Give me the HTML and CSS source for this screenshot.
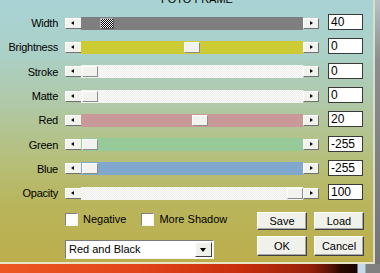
FILE: index.html
```html
<!DOCTYPE html>
<html>
<head>
<meta charset="utf-8">
<title>Foto Frame</title>
<link rel="stylesheet" href="styles.css">
</head>
<body>
<div class="screen">
  <div class="top">
    <div class="dialog">
      <div class="title">FOTO FRAME</div>
      <div class="sliders">
        <div class="row">
          <span class="label">Width</span>
          <div class="slider">
            <div class="arrow left"><i class="tri"></i></div>
            <div class="track t-gray"><div class="thumb checker" style="left:19px"></div></div>
            <div class="arrow right"><i class="tri"></i></div>
          </div>
          <span class="value">40</span>
        </div>
        <div class="row">
          <span class="label">Brightness</span>
          <div class="slider">
            <div class="arrow left"><i class="tri"></i></div>
            <div class="track t-yellow"><div class="thumb" style="left:103px"></div></div>
            <div class="arrow right"><i class="tri"></i></div>
          </div>
          <span class="value">0</span>
        </div>
        <div class="row">
          <span class="label">Stroke</span>
          <div class="slider">
            <div class="arrow left"><i class="tri"></i></div>
            <div class="track t-light"><div class="thumb" style="left:1px"></div></div>
            <div class="arrow right"><i class="tri"></i></div>
          </div>
          <span class="value">0</span>
        </div>
        <div class="row">
          <span class="label">Matte</span>
          <div class="slider">
            <div class="arrow left"><i class="tri"></i></div>
            <div class="track t-light"><div class="thumb" style="left:1px"></div></div>
            <div class="arrow right"><i class="tri"></i></div>
          </div>
          <span class="value">0</span>
        </div>
        <div class="row">
          <span class="label">Red</span>
          <div class="slider">
            <div class="arrow left"><i class="tri"></i></div>
            <div class="track t-red"><div class="thumb" style="left:111px"></div></div>
            <div class="arrow right"><i class="tri"></i></div>
          </div>
          <span class="value">20</span>
        </div>
        <div class="row">
          <span class="label">Green</span>
          <div class="slider">
            <div class="arrow left"><i class="tri"></i></div>
            <div class="track t-green"><div class="thumb" style="left:1px"></div></div>
            <div class="arrow right"><i class="tri"></i></div>
          </div>
          <span class="value">-255</span>
        </div>
        <div class="row">
          <span class="label">Blue</span>
          <div class="slider">
            <div class="arrow left"><i class="tri"></i></div>
            <div class="track t-blue"><div class="thumb" style="left:1px"></div></div>
            <div class="arrow right"><i class="tri"></i></div>
          </div>
          <span class="value">-255</span>
        </div>
        <div class="row">
          <span class="label">Opacity</span>
          <div class="slider">
            <div class="arrow left"><i class="tri"></i></div>
            <div class="track t-light"><div class="thumb" style="left:206px"></div></div>
            <div class="arrow right"><i class="tri"></i></div>
          </div>
          <span class="value">100</span>
        </div>
      </div>
      <div class="bottom">
        <div class="brow a">
          <div class="left">
            <label class="check"><span class="box"></span><span>Negative</span></label>
            <label class="check"><span class="box"></span><span>More Shadow</span></label>
          </div>
          <div class="buttons">
            <span class="btn">Save</span>
            <span class="btn">Load</span>
          </div>
        </div>
        <div class="brow b">
          <div class="left">
            <div class="select"><span>Red and Black</span><span class="drop"><i class="dtri"></i></span></div>
          </div>
          <div class="buttons">
            <span class="btn">OK</span>
            <span class="btn">Cancel</span>
          </div>
        </div>
      </div>
    </div>
    <div class="edge"></div>
  </div>
  <div class="desktop"></div>
</div>
</body>
</html>
```

FILE: styles.css
```css
* { box-sizing: border-box; }
html, body { margin: 0; padding: 0; }
body {
  width: 380px;
  height: 273px;
  overflow: hidden;
  font-family: "Liberation Sans", Arial, sans-serif;
  font-size: 11px;
  color: #000;
  background: #7a7a7a;
}
.screen { display: flex; flex-direction: column; width: 380px; height: 273px; }
.top { display: flex; height: 264px; }
.dialog {
  width: 375px;
  height: 264px;
  border-right: 2px solid #dcdccc;
  border-bottom: 2px solid #e8e4c8;
  background: linear-gradient(to bottom, #a8d3d5 0px, #abd0c6 55px, #b0c8a6 105px, #b5c07e 155px, #b9b55c 205px, #bcae4c 262px);
  overflow: hidden;
  display: flex;
  flex-direction: column;
}
.edge { flex: 1; background: linear-gradient(to bottom, #b4c4c4 0px, #8a8e8e 60px, #747474 264px); }
.desktop {
  height: 9px;
  background: linear-gradient(to right, #ec5822 0px, #e24419 140px, #c82e0c 240px, #962008 310px, #5a1406 330px, #2a0a02 340px, #1a0600 357px, #c4d8e8 358px, #c4d8e8 365px, #808080 366px);
}
.title {
  height: 13px;
  margin-top: -7px;
  line-height: 13px;
  text-align: center;
  padding-left: 21px;
  flex: none;
}
.sliders { display: flex; flex-direction: column; padding-top: 5px; }
.row { display: flex; align-items: center; height: 24.3px; flex: none; }
.label { width: 58px; flex: none; text-align: right; letter-spacing: -0.25px; white-space: nowrap; }
.slider {
  display: grid;
  grid-template-columns: 16px 222px 16px;
  align-items: center;
  width: 254px;
  height: 13px;
  margin-left: 7px;
  flex: none;
}
.arrow {
  width: 16px;
  height: 11px;
  background: #f2f2ee;
  border: 1px solid;
  border-color: #ffffff #707070 #707070 #ffffff;
  position: relative;
}
.tri {
  position: absolute;
  top: 2px;
  left: 5px;
  width: 0;
  height: 0;
  border-top: 2.5px solid transparent;
  border-bottom: 2.5px solid transparent;
}
.left .tri { border-right: 3px solid #000; }
.right .tri { border-left: 3px solid #000; left: 6px; }
.track { position: relative; width: 222px; height: 13px; }
.t-gray { background: #7f7f7f; }
.t-yellow { background: #cccb33; }
.t-red { background: #c99899; }
.t-green { background: #96ca98; }
.t-blue { background: #80a8cf; }
.t-light { background: repeating-conic-gradient(#fbfbfa 0 25%, #ededeb 0 50%) 0 0 / 2px 2px; }
.thumb {
  position: absolute;
  top: 1px;
  width: 16px;
  height: 11px;
  background: #f2f2ee;
  border: 1px solid;
  border-color: #ffffff #8c8c8c #8c8c8c #ffffff;
}
.thumb.checker {
  width: 14px;
  background: repeating-conic-gradient(#000 0 25%, #fff 0 50%) 0 0 / 2px 2px;
  border-color: #b0b0b0 #606060 #606060 #b0b0b0;
}
.value {
  flex: none;
  width: 35px;
  height: 16px;
  margin-left: 9px;
  margin-bottom: 2px;
  background: #fff;
  border: 1px solid #3a3a3a;
  font-size: 12px;
  line-height: 14px;
  padding-left: 2px;
}
.bottom { display: flex; flex-direction: column; padding-left: 65px; }
.brow { display: flex; flex: none; }
.brow.a { margin-top: 6.6px; height: 18px; }
.brow.b { margin-top: 6px; height: 20px; }
.left { width: 149px; flex: none; display: flex; }
.check { display: flex; align-items: center; gap: 5px; height: 15px; white-space: nowrap; }
.check + .check { margin-left: 15px; }
.box {
  width: 13px;
  height: 13px;
  background: #fff;
  border: 1px solid;
  border-color: #808080 #f4f4f4 #f4f4f4 #808080;
}
.buttons { display: flex; gap: 7px; margin-left: 43px; }
.btn {
  width: 50px;
  background: #f1f1ec;
  border: 1px solid;
  border-color: #ffffff #404040 #404040 #ffffff;
  box-shadow: inset -1px -1px #a8a8a8;
  display: flex;
  align-items: center;
  justify-content: center;
}
.select {
  width: 149px;
  height: 19px;
  margin-top: 4px;
  background: #fff;
  border: 1px solid;
  border-color: #7a7a7a #f4f4f4 #f4f4f4 #7a7a7a;
  display: flex;
  justify-content: space-between;
  align-items: center;
  padding-left: 3px;
  padding-right: 1px;
}
.drop {
  position: relative;
  width: 17px;
  height: 15px;
  background: #f1f1ec;
  border: 1px solid;
  border-color: #ffffff #404040 #404040 #ffffff;
}
.dtri {
  position: absolute;
  left: 4px;
  top: 5px;
  width: 0;
  height: 0;
  border-left: 3.5px solid transparent;
  border-right: 3.5px solid transparent;
  border-top: 4px solid #000;
}
```
